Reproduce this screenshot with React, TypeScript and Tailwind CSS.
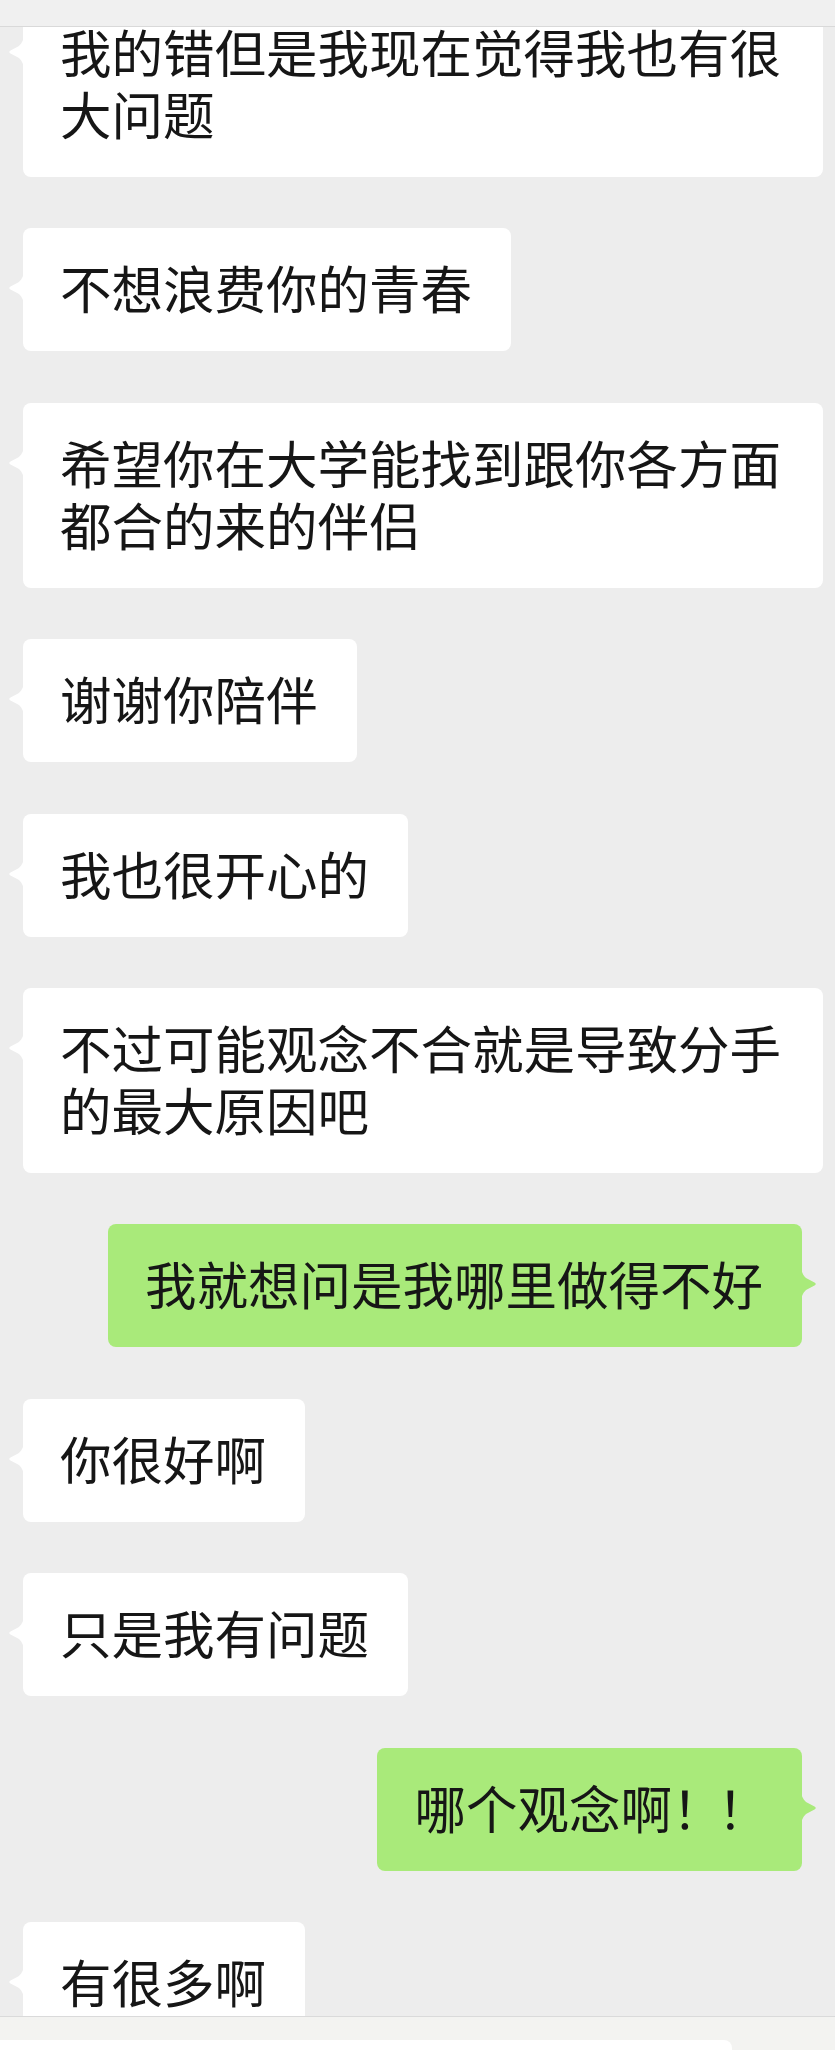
import React from 'react';

type Msg = { text: React.ReactNode; mine?: boolean };

const messages: Msg[] = [
    { text: '我的错但是我现在觉得我也有很大问题' },
    { text: '不想浪费你的青春' },
    { text: '希望你在大学能找到跟你各方面都合的来的伴侣' },
    { text: '谢谢你陪伴' },
    { text: '我也很开心的' },
    { text: '不过可能观念不合就是导致分手的最大原因吧' },
    { text: '我就想问是我哪里做得不好', mine: true },
    { text: '你很好啊' },
    { text: '只是我有问题' },
    {
        text: (
            <>
                哪个观念啊<span className="tracking-[-6px]">！！</span>
            </>
        ),
        mine: true,
    },
    { text: '有很多啊' },
];

function Tail({ mine }: { mine?: boolean }) {
    // little pointer beside the bubble, points left for them and right for me
    return (
        <svg
            width="16"
            height="40"
            viewBox="0 0 16 40"
            className={mine ? 'absolute right-[-15px] top-[40px] -scale-x-100' : 'absolute left-[-15px] top-[40px]'}
        >
            <path
                d="M16 0 C16 8 14 11 11 14 L2.5 18.5 Q0 20 2.5 21.5 L11 26 C14 29 16 32 16 40 Z"
                fill={mine ? '#a9ea7a' : '#ffffff'}
            />
        </svg>
    );
}

function Bubble({ msg }: { msg: Msg }) {
    return (
        <div className={msg.mine ? 'flex justify-end pr-[33px]' : 'flex justify-start pl-[23px]'}>
            <div
                className={
                    'relative max-w-[800px] rounded-[8px] pl-[37px] pr-[39px] pt-[28px] pb-[33px] text-[51.5px] leading-[62px] text-[#161616] ' +
                    (msg.mine ? 'bg-[#a9ea7a]' : 'bg-white')
                }
            >
                <Tail mine={msg.mine} />
                {msg.text}
            </div>
        </div>
    );
}

export default function App() {
    return (
        <div className="relative h-[2050px] w-[835px] overflow-hidden bg-[#ededed] font-['Noto_Sans_CJK_SC',sans-serif]">
            <div className="absolute inset-x-0 top-0 z-10 h-[27px] border-b border-[#d9d9d9] bg-[#f0f0f0]" />

            <div className="-mt-[8px] flex flex-col gap-[51.4px]">
                {messages.map((m, i) => (
                    <Bubble key={i} msg={m} />
                ))}
            </div>

            <div className="absolute inset-x-0 bottom-0 z-10 h-[34px] border-t border-[#dadada] bg-[#f3f3f1] pt-[23px]">
                <div className="h-[11px] w-[732px] rounded-tr-[8px] bg-white" />
            </div>
        </div>
    );
}
